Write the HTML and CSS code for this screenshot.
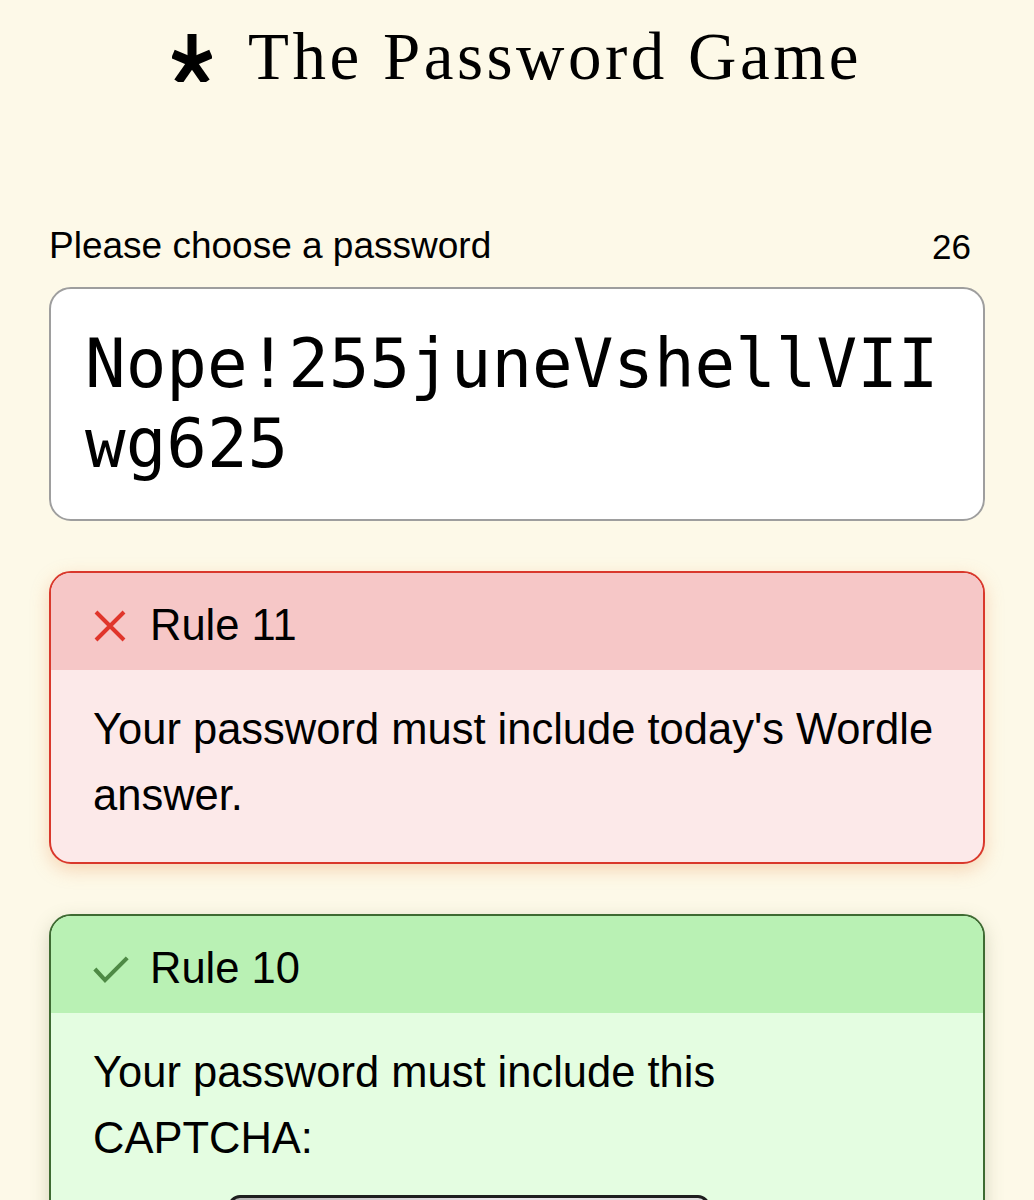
FILE: index.html
```html
<!DOCTYPE html>
<html lang="en">
<head>
    <meta charset="UTF-8">
    <meta name="viewport" content="width=device-width, initial-scale=1.0">
    <title>The Password Game</title>
    <link rel="stylesheet" href="styles.css">
</head>
<body>
    <div class="container">
        <h1 class="title">
            <svg class="star" width="40" height="48" viewBox="0 0 40 48">
                <g stroke="#000" stroke-width="9" fill="none">
                    <path d="M20 28 L20 0"/>
                    <path d="M20 28 L1 20"/>
                    <path d="M20 28 L39 20"/>
                    <path d="M20 28 L6 48"/>
                    <path d="M20 28 L34 48"/>
                </g>
            </svg>
            <span>The Password Game</span>
        </h1>

        <div class="password-label">
            <span>Please choose a password</span>
            <span class="count">26</span>
        </div>
        <div class="password-box">Nope!255juneVshellVIIwg625</div>

        <div class="rule error">
            <div class="rule-top">
                <div class="icon">
                    <svg width="34" height="34" viewBox="0 0 34 34">
                        <path d="M3 3 L31 31 M31 3 L3 31" stroke="#e0352b" stroke-width="4" fill="none"/>
                    </svg>
                </div>
                <span>Rule 11</span>
            </div>
            <div class="rule-desc">Your password must include today's Wordle answer.</div>
        </div>

        <div class="rule ok">
            <div class="rule-top">
                <div class="icon">
                    <svg width="40" height="32" viewBox="0 0 40 32">
                        <path d="M2 16 L13 28 L37 4" stroke="#4e8a45" stroke-width="4.5" fill="none"/>
                    </svg>
                </div>
                <span>Rule 10</span>
            </div>
            <div class="rule-desc">
                Your password must include this CAPTCHA:
                <div class="captcha">
                    <div class="captcha-img"></div>
                </div>
            </div>
        </div>
    </div>
</body>
</html>
```
FILE: styles.css
```css
body {
    background-color: #fdf9e8;
    color: #000;
    font-family: 'Liberation Sans', Arial, sans-serif;
    margin: 0;
    padding: 0;
}

.container {
    width: 936px;
    margin: 0 auto;
}

.title {
    display: flex;
    justify-content: center;
    align-items: baseline;
    gap: 36px;
    font-family: 'Liberation Serif', 'Times New Roman', serif;
    font-weight: normal;
    font-size: 67px;
    margin: 0;
    padding-top: 18px;
    height: 225px;
    box-sizing: border-box;
    letter-spacing: 3.5px;
}

.star {
    align-self: flex-start;
    margin-top: 16px;
}

.password-label {
    display: flex;
    justify-content: space-between;
    align-items: flex-end;
    font-size: 37px;
    padding: 0 14px 0 0;
    margin-bottom: 20px;
}

.password-label .count {
    font-size: 35px;
}

.password-box {
    background-color: #fff;
    border: 2px solid #9e9e9e;
    border-radius: 22px;
    padding: 35px 36px 35px 34px;
    font-family: 'DejaVu Sans Mono', monospace;
    font-size: 67.5px;
    line-height: 80px;
    word-break: break-all;
    margin-bottom: 50px;
}

.rule {
    border: 2px solid;
    border-radius: 22px;
    overflow: hidden;
    margin-bottom: 50px;
    font-size: 43.5px;
}

.rule.error {
    border-color: #d9382c;
    background-color: #fce9e9;
    box-shadow: 0 6px 18px rgba(234, 150, 90, 0.35);
}

.rule.ok {
    border-color: #3e6b32;
    background-color: #e4fde1;
    box-shadow: 0 6px 18px rgba(120, 130, 90, 0.3);
}

.rule-top {
    display: flex;
    align-items: center;
    gap: 20px;
    height: 97px;
    padding: 8px 0 0 42px;
    box-sizing: border-box;
}

.icon {
    width: 37px;
    display: flex;
    align-items: center;
}

.rule.error .rule-top {
    background-color: #f6c7c7;
}

.rule.ok .rule-top {
    background-color: #b9f1b4;
}

.rule-desc {
    padding: 26px 48px 34px 42px;
    line-height: 66px;
}

.captcha {
    margin-top: 24px;
    padding-left: 135px;
}

.captcha-img {
    width: 476px;
    height: 150px;
    border: 3px solid #1e1e1e;
    border-radius: 12px;
    background: linear-gradient(90deg, #b4b4b4, #e8e4ea 55%, #dcdcdc);
}
```
